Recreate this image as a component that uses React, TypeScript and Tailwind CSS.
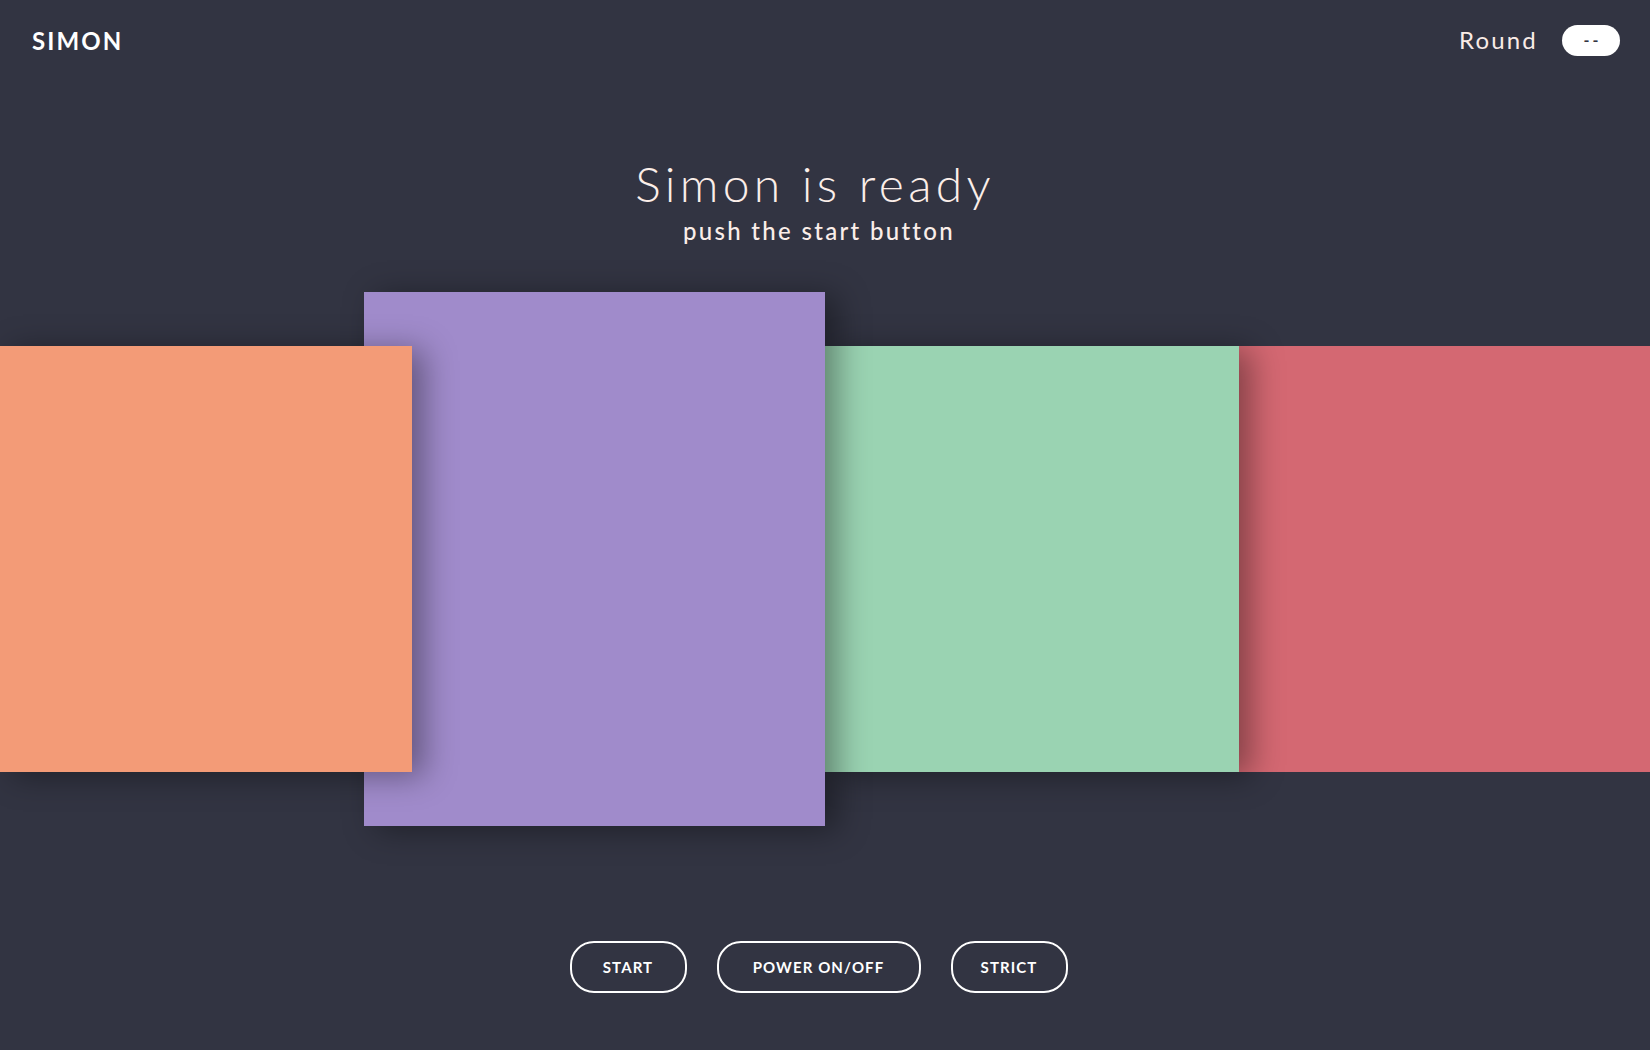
import React from "react";

const font = { fontFamily: "Lato, 'Open Sans', sans-serif" };

function Pad({ className }: { className: string }) {
  return <div className={`relative shrink-0 ${className}`} />;
}

function GameButton({ label, width }: { label: string; width: string }) {
  return (
    <button
      className={`${width} h-[52px] rounded-[24px] border-2 border-white text-white text-[15px] font-bold tracking-[1.1px] uppercase flex items-center justify-center`}
    >
      {label}
    </button>
  );
}

export default function App() {
  return (
    <div className="min-h-screen w-full bg-[#323442] overflow-hidden" style={font}>
      {/* Header */}
      <header className="flex items-center justify-between pl-[32px] pr-[30px] pt-[25px] h-[55px]">
        <div className="text-white text-[24px] leading-[30px] font-bold tracking-[2.1px] mt-[1px]">SIMON</div>
        <div className="flex items-center gap-[24px]">
          <span className="text-[#f9ebe6] text-[24px] leading-[30px] tracking-[2.2px]">Round</span>
          <span className="w-[58px] h-[31px] rounded-full bg-white text-[#323442] text-[16px] font-bold tracking-[3px] flex items-center justify-center pl-[3px]">
            --
          </span>
        </div>
      </header>

      {/* Status */}
      <div className="flex flex-col items-center mt-[105px] pr-[20px]">
        <h1 className="text-[#fbeee9] text-[48px] leading-[48px] font-light tracking-[4.3px]">
          Simon is ready
        </h1>
        <p className="text-[#fbeee9] text-[24px] leading-[24px] font-medium tracking-[2.3px] mt-[11px] pl-[8px]">
          push the start button
        </p>
      </div>

      {/* Pads */}
      <div className="flex items-center mt-[49px] h-[534px]">
        <Pad className="z-40 w-[412px] h-[426px] bg-[#f39b77] shadow-[12px_4px_30px_rgba(0,0,0,0.38)]" />
        <Pad className="z-30 -ml-[48px] w-[461px] h-[534px] bg-[#a08bcb] shadow-[12px_4px_30px_rgba(0,0,0,0.38)]" />
        <Pad className="z-20 w-[414px] h-[426px] bg-[#9ad3b2] shadow-[12px_4px_30px_rgba(0,0,0,0.38)]" />
        <Pad className="z-10 flex-1 h-[426px] bg-[#d46872]" />
      </div>

      {/* Controls */}
      <div className="flex justify-center gap-[30px] mt-[115px] pr-[13px]">
        <GameButton label="Start" width="w-[117px]" />
        <GameButton label="Power on/off" width="w-[204px]" />
        <GameButton label="Strict" width="w-[117px]" />
      </div>
    </div>
  );
}
